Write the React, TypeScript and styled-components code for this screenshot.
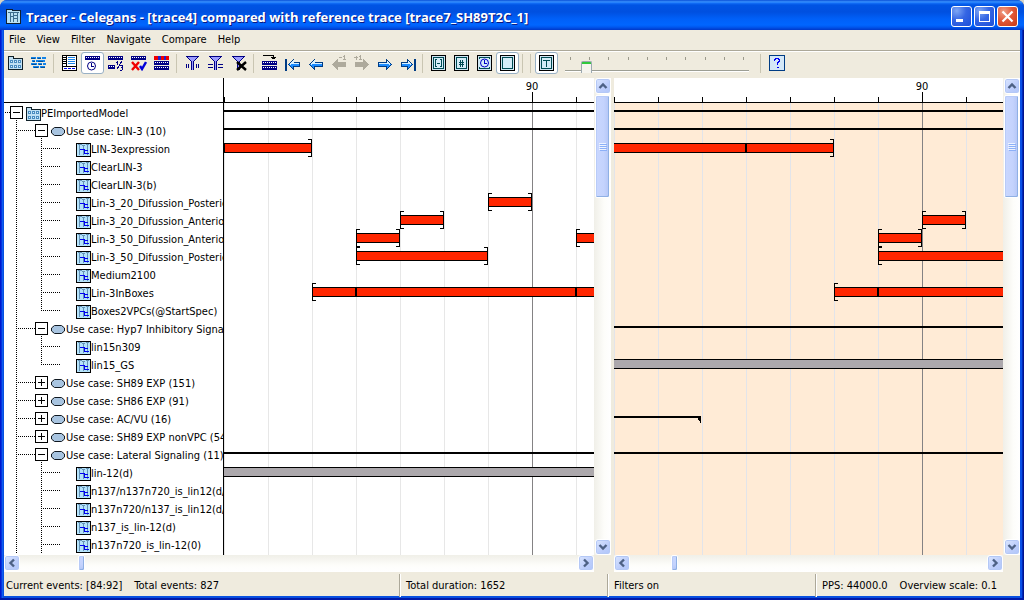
import React from "react";
import styled, { createGlobalStyle, css } from "styled-components";

const ROW = 18;
const HEADER = 25;
const STEP = 44;
const FIRST = 83;
const UI_FONT = `"DejaVu Sans Condensed", "Noto Sans", sans-serif`;

const GlobalStyle = createGlobalStyle`
  * { box-sizing: border-box; }
  body {
    margin: 0;
    background: #d8d4c4;
    font-family: ${UI_FONT};
    font-size: 11px;
    line-height: 14px;
    color: #000;
  }
  button { font: inherit; color: inherit; padding: 0; margin: 0; border: 0; background: none; }
`;

/* ---------- window frame ---------- */

const Window = styled.div`
  display: flex;
  flex-direction: column;
  min-height: 100vh;
  padding: 0 4px 4px;
  border-radius: 7px 7px 0 0;
  overflow: hidden;
  background:
    linear-gradient(to bottom, transparent calc(100% - 2px), #0019a8 calc(100% - 2px)),
    linear-gradient(to right, #0019cf 0 1px, #0734de 1px 2px, #0f5cf0 2px 3px, #0850e0 3px calc(100% - 4px), #0850e8 calc(100% - 4px) calc(100% - 2px), #0028b8 calc(100% - 2px) calc(100% - 1px), #00138c calc(100% - 1px));
`;

const TitleBar = styled.header`
  display: flex;
  align-items: center;
  height: 30px;
  margin: 0 -4px;
  padding: 3px 6px 0;
  gap: 5px;
  background: linear-gradient(to bottom, #0a50d8 0, #3a94ff 2px, #1470f8 3px, #0054e4 5px, #0050e0 12px, #0060f8 19px, #0066ff 25px, #0058f0 27px, #0038c8 30px);
`;

const Title = styled.h1`
  flex: 1;
  margin: 0;
  overflow: hidden;
  white-space: nowrap;
  font: bold 13px/18px "Open Sans", sans-serif;
  color: #fff;
  text-shadow: 1px 1px 0 #0a1883;
`;

const WindowButtons = styled.div`
  display: flex;
  gap: 2px;
`;

const WindowButton = styled.button<{ $close?: boolean }>`
  width: 21px;
  height: 21px;
  border: 1px solid #fff;
  border-radius: 3px;
  background: ${(p) =>
    p.$close
      ? "radial-gradient(circle at 30% 25%, #f0a088, #e2593a 45%, #c83a14)"
      : "radial-gradient(circle at 25% 20%, #7ea6f4, #3566e4 45%, #1d4fd8)"};
  svg { display: block; }
`;

/* ---------- menu and tool bars ---------- */

const MenuBar = styled.nav`
  display: flex;
  align-items: center;
  gap: 11px;
  height: 22px;
  padding: 0 5px 2px;
  background: #efebde;
  border-bottom: 1px solid #fff;
  box-shadow: inset 0 -1px 0 #aca899;
`;

const MenuItem = styled.button`
  height: 18px;
`;

const ToolBar = styled.div`
  display: flex;
  align-items: center;
  height: 26px;
  padding-bottom: 4px;
  background: #efebde;
`;

const ToolButton = styled.button<{ $on?: boolean }>`
  display: flex;
  flex: none;
  align-items: center;
  justify-content: center;
  width: 23px;
  height: 22px;
  border: 1px solid transparent;
  border-radius: 3px;
  ${(p) =>
    p.$on &&
    css`
      border-color: #98b0c4;
      background: #fff;
    `}
  svg { display: block; flex: none; }
`;

const Separator = styled.span`
  flex: none;
  width: 1px;
  height: 19px;
  margin: 0 4px 0 3px;
  background: #c9c5b2;
`;

const ScaleControl = styled.div`
  display: flex;
  flex-direction: column;
  flex: none;
  width: 199px;
  height: 22px;
  padding: 5px 8px 0 7px;
`;

const TickRow = styled.span`
  display: flex;
  justify-content: space-between;
  padding: 0 5px;
  height: 4px;
`;

const TickMark = styled.i`
  width: 1px;
  height: 3px;
  background: #9c9a8c;
`;

const Range = styled.input`
  appearance: none;
  width: 100%;
  height: 12px;
  margin: 0;
  background: linear-gradient(to bottom, transparent 9px, #9c9e94 9px 10px, #fff 10px 11px, transparent 11px);
  &::-webkit-slider-thumb {
    appearance: none;
    width: 11px;
    height: 12px;
    border: 1px solid #9ba8b0;
    border-bottom: 0;
    border-radius: 2px 2px 0 0;
    background: linear-gradient(to bottom, #2fc83c 0 2px, #f5f4ee 2px);
  }
`;

/* ---------- trace area ---------- */

const Workspace = styled.main`
  flex: 1;
  display: grid;
  grid-template-columns: minmax(0, 590fr) 17px 3px minmax(0, 389fr) 17px;
  grid-template-rows: 1fr 17px;
  background: #efebde;
`;

const Panel = styled.section<{ $tint?: string }>`
  display: flex;
  min-width: 0;
  background: ${(p) => p.$tint ?? "#fff"};
`;

const Tree = styled.div`
  flex: none;
  width: 220px;
  overflow: hidden;
  border-right: 1px solid #000;
`;

const TreeHeader = styled.div`
  height: ${HEADER}px;
  margin-bottom: 1px;
  border-bottom: 1px solid #000;
`;

const TreeRow = styled.div`
  display: flex;
  height: ${ROW}px;
  white-space: nowrap;
`;

const Indent = styled.span<{ $w: number }>`
  flex: none;
  width: ${(p) => p.$w}px;
`;

const Stem = styled.span<{ $half?: boolean }>`
  flex: none;
  width: 1px;
  height: ${(p) => (p.$half ? 9 : ROW)}px;
  background: repeating-linear-gradient(to bottom, #000 0 1px, transparent 1px 2px);
`;

const Branch = styled.span<{ $w: number }>`
  flex: none;
  width: ${(p) => p.$w}px;
  background: repeating-linear-gradient(to right, transparent 0 1px, #000 1px 2px) 0 8px / 100% 1px no-repeat;
`;

const ToggleCell = styled.span`
  display: flex;
  flex: none;
  flex-direction: column;
  align-items: center;
  width: 13px;
  padding-top: 2px;
`;

const ToggleStem = styled.span`
  flex: 1;
  width: 1px;
  background: repeating-linear-gradient(to bottom, transparent 0 1px, #000 1px 2px);
`;

const Toggle = styled.button`
  width: 13px;
  height: 13px;
  border: 1px solid #000;
  background: #fff;
  svg { display: block; }
`;

const NodeIcon = styled.svg`
  flex: none;
  margin: 3px 0 0;
`;

const NodeLabel = styled.span`
  line-height: 20px;
`;

const Timeline = styled.svg`
  flex: 1;
  min-width: 0;
  width: 0;
  overflow: hidden;
  font-family: ${UI_FONT};
  font-size: 11px;
`;

/* ---------- scroll bars ---------- */

const ScrollBar = styled.div<{ $vertical?: boolean }>`
  display: flex;
  flex-direction: ${(p) => (p.$vertical ? "column" : "row")};
  min-width: 0;
  padding: ${(p) => (p.$vertical ? "0 1px" : "0")};
  background: linear-gradient(${(p) => (p.$vertical ? "to right" : "to bottom")}, #f0efe8, #fdfdfa 60%, #fff);
`;

const ScrollButton = styled.button`
  display: flex;
  flex: none;
  align-items: center;
  justify-content: center;
  width: 16px;
  height: 16px;
  border: 1px solid #fff;
  border-radius: 3px;
  background: linear-gradient(135deg, #dbe6ff, #bccdfb 60%, #b0c6fa);
  box-shadow: inset 0 0 0 1px #b4c8f6;
`;

const Thumb = styled.div<{ $vertical?: boolean; $size: number }>`
  display: flex;
  flex: none;
  align-items: center;
  justify-content: center;
  width: ${(p) => (p.$vertical ? 15 : p.$size)}px;
  height: ${(p) => (p.$vertical ? p.$size : 16)}px;
  border: 1px solid #fff;
  border-radius: 2px;
  background: linear-gradient(${(p) => (p.$vertical ? "to right" : "to bottom")}, #c9d7ff, #c4d3fd 60%, #b4c6f6);
  box-shadow: inset -1px -1px 0 #8fb0e4, inset 1px 1px 0 #b8cbf8;
`;

const Gap = styled.span<{ $size?: number }>`
  flex: ${(p) => (p.$size ? `0 0 ${p.$size}px` : "1")};
`;

/* ---------- status bar ---------- */

const StatusBar = styled.footer`
  display: grid;
  grid-template-columns: minmax(0, 395fr) minmax(0, 208fr) minmax(0, 208fr) minmax(0, 205fr);
  height: 24px;
  padding-top: 2px;
  background: #efebde;
`;

const StatusCell = styled.div`
  display: flex;
  gap: 12px;
  padding: 1px 0 0 2px;
  line-height: 22px;
  white-space: nowrap;
  & + & {
    padding-left: 6px;
    border-left: 1px solid #aca899;
    box-shadow: inset 1px 0 0 #fff;
  }
`;

/* ---------- icons ---------- */

const NAVY = "#000084";

type IconProps = { children: React.ReactNode };
const Icon = ({ children }: IconProps) => (
  <svg width="16" height="16" viewBox="0 0 16 16" shapeRendering="crispEdges" fill="none" aria-hidden="true">
    {children}
  </svg>
);

const Film = ({ y, x = 0, w = 15 }: { y: number; x?: number; w?: number }) => (
  <>
    <rect x={x} y={y} width={w} height="4" fill={NAVY} />
    <path d={`M${x + 1} ${y + 1.5}H${x + w - 1}`} stroke="#fff" strokeDasharray="1 1" />
  </>
);

const FolderShape = () => (
  <>
    <path d="M0.5 14.5V1.5H5.5V3.5H14.5V14.5Z" fill="#bfe0f4" stroke="#102028" />
    <path d="M2 5h3v3H2zM6 5h3v3H6zM10 5h3v3h-3zM2 10h3v3H2zM6 10h3v3H6zM10 10h3v3h-3z" fill="#4a8cc0" />
    <path d="M3 6h1v1H3zM7 6h1v1H7zM11 6h1v1h-1zM3 11h1v1H3zM7 11h1v1H7zM11 11h1v1h-1z" fill="#d8f0ff" />
  </>
);

const Funnel = () => (
  <>
    <path d="M2 2H13L9 7V15H7V7Z" fill="#9c9cff" />
    <path d="M1 1.5H14M2 2.5H3M12 2.5H13M3 3.5H4M11 3.5H12M4 4.5H5M10 4.5H11M5 5.5H6M9 5.5H10M6.5 6V15M8.5 6V15" stroke={NAVY} />
  </>
);

const Arrow = ({ right, off, bar }: { right?: boolean; off?: boolean; bar?: boolean }) => {
  const tip = bar ? 3 : 1;
  return (
    <svg width="16" height="16" viewBox="0 0 16 16" shapeRendering="crispEdges" aria-hidden="true">
      <g transform={right ? "translate(16 0) scale(-1 1)" : undefined}>
        {bar && <rect x="0" y="4" width="2" height="12" fill="#003c84" />}
        <path
          d={`M${tip}.5 9.5L${tip + 5}.5 4.500V7.5H14.5V11.5H${tip + 5}.5V14.5Z`}
          fill={off ? "#aeaa9c" : "#1c8cff"}
          stroke={off ? "#aeaa9c" : "#003c84"}
        />
        {!off && <path d={`M${tip + 2} 9.5L${tip + 5} 6.5V8.5H14`} fill="#d8f0ff" stroke="#d8f0ff" />}
      </g>
      {off && !right && <path d="M8 2.5h3M13.5 0v5M12 1.5h1M12 4.5h3" stroke="#aeaa9c" />}
      {off && right && <path d="M0 2.5h4M2 0.5v4M6.5 0v5M5 1.5h1M5 4.5h3" stroke="#aeaa9c" />}
    </svg>
  );
};

const Frame = ({ children }: { children?: React.ReactNode }) => (
  <>
    <rect x="0.5" y="0.5" width="14" height="15" fill="#cfe6f4" stroke="#000" />
    <rect x="2.5" y="2.5" width="10" height="11" fill="#d4ecf8" stroke="#004c54" />
    {children}
  </>
);

const icons = {
  table: <Icon><FolderShape /></Icon>,
  bricks: (
    <Icon>
      <path d="M0 3H5M6 3H10M11 3H15M1 6H4M5 6H14M0 9H6M7 9H11M12 9H15M2 12H8M9 12H14" stroke="#1484e8" strokeWidth="2" />
      <path d="M0 3.5H4M7 3.5H10M2 6.5H4M7 6.5H12M1 9.5H5M8 9.5H11M3 12.5H7M10 12.5H14" stroke="#00509c" />
    </Icon>
  ),
  list: (
    <Icon>
      <rect x="0.5" y="0.5" width="14" height="15" fill="#fff" stroke="#000" />
      <path d="M4.5 1V11M1 11.5H14" stroke="#000" />
      <path d="M1 2.5H4M1 4.5H4M1 6.5H4M1 8.5H4" stroke="#000" />
      <path d="M6 2.5H13M6 4.5H13M6 6.5H13M6 8.5H13" stroke="#1c84e8" />
      <path d="M2 13.5H13" stroke="#0000e0" strokeDasharray="3 1" />
    </Icon>
  ),
  filmClock: (
    <Icon>
      <Film y={1} />
      <circle cx="6.5" cy="11" r="4" stroke={NAVY} shapeRendering="auto" />
      <path d="M6.5 8V11.5H9" stroke={NAVY} />
    </Icon>
  ),
  filmThird: (
    <Icon>
      <Film y={1} />
      <Film y={10} w={7} />
      <path d="M9.5 6V10M8 7.5H9M14 6L9 14M12 10.5H15M14.5 11V12M13 12.5H15M14.5 13V15M12 15.5H14" stroke={NAVY} />
    </Icon>
  ),
  filmCheck: (
    <Icon>
      <Film y={1} />
      <path d="M1 7L8 15M8 7L1 15" stroke="#f00000" strokeWidth="2.4" shapeRendering="auto" />
      <path d="M9 11L11 14L15 7" stroke="#0000d8" strokeWidth="2.4" shapeRendering="auto" />
    </Icon>
  ),
  filmRed: (
    <Icon>
      <rect y="1" width="15" height="4" fill="#f00000" />
      <path d="M4 1h3v4H4zM10 1h2v4H10z" fill="#2020d0" />
      <Film y={6} />
      <Film y={11} />
    </Icon>
  ),
  funnelV: (
    <Icon>
      <Funnel />
      <path d="M1.5 9V13M3.5 9V13M11.5 9V13M13.5 9V13" stroke={NAVY} />
    </Icon>
  ),
  funnelH: (
    <Icon>
      <Funnel />
      <path d="M0 9.5H5M0 12.5H5M10 9.5H15M10 12.5H15" stroke={NAVY} />
    </Icon>
  ),
  funnelX: (
    <Icon>
      <Funnel />
      <path d="M6 7L15 15M15 7L6 15" stroke="#000" strokeWidth="2.4" shapeRendering="auto" />
    </Icon>
  ),
  insert: (
    <Icon>
      <path d="M1 0.5H11.5V4M9 2.5H14M10 3.5H13" stroke="#000" />
      <Film y={6} />
      <Film y={11} />
    </Icon>
  ),
  brackets: (
    <Icon><Frame><path d="M6 4.5H4.5V11.5H6M9 4.5H10.5V11.5H9M6 8.5H9" stroke="#004c54" /></Frame></Icon>
  ),
  hash: (
    <Icon><Frame><path d="M6.5 5V12M8.5 5V12M5 7.5H10M5 9.5H10" stroke="#004c54" /></Frame></Icon>
  ),
  clock: (
    <Icon>
      <Frame>
        <rect x="2" y="4" width="11" height="8" fill="#d4ecf8" />
        <circle cx="7.5" cy="8" r="4" stroke="#0000c8" shapeRendering="auto" />
        <path d="M7.5 5V8.5H10" stroke="#0000c8" />
      </Frame>
    </Icon>
  ),
  blank: <Icon><Frame /></Icon>,
  text: <Icon><Frame><path d="M4 5.5H11M7.5 5V12" stroke="#004c54" /></Frame></Icon>,
  help: (
    <Icon>
      <rect x="0.5" y="0.5" width="15" height="15" fill="#d4e8f8" stroke="#003c84" />
      <path d="M5.5 6V4.5H6.5V3.5H9.5V4.5H10.5V6.5H9.5V7.5H8.5V9.5M8 12.5H10" stroke="#0000f0" strokeWidth="1.4" />
    </Icon>
  ),
};

const Chevron = ({ turn }: { turn: number }) => (
  <svg width="10" height="10" viewBox="0 0 10 10" aria-hidden="true">
    <path d="M1.5 7L5 3.5L8.5 7" fill="none" stroke="#4d6185" strokeWidth="2.4" transform={`rotate(${turn} 5 5)`} />
  </svg>
);

/* ---------- data ---------- */

type TreeNode = { label: string; depth: 0 | 1 | 2; open?: boolean; last?: boolean };

const nodes: TreeNode[] = [
  { label: "PEImportedModel", depth: 0, open: true },
  { label: "Use case: LIN-3 (10)", depth: 1, open: true },
  { label: "LIN-3expression", depth: 2 },
  { label: "ClearLIN-3", depth: 2 },
  { label: "ClearLIN-3(b)", depth: 2 },
  { label: "Lin-3_20_Difussion_Posterio", depth: 2 },
  { label: "Lin-3_20_Difussion_Anterio", depth: 2 },
  { label: "Lin-3_50_Difussion_Anterio", depth: 2 },
  { label: "Lin-3_50_Difussion_Posterio", depth: 2 },
  { label: "Medium2100", depth: 2 },
  { label: "Lin-3InBoxes", depth: 2 },
  { label: "Boxes2VPCs(@StartSpec)", depth: 2, last: true },
  { label: "Use case: Hyp7 Inhibitory Signal", depth: 1, open: true },
  { label: "lin15n309", depth: 2 },
  { label: "lin15_GS", depth: 2, last: true },
  { label: "Use case: SH89 EXP (151)", depth: 1 },
  { label: "Use case: SH86 EXP (91)", depth: 1 },
  { label: "Use case: AC/VU (16)", depth: 1 },
  { label: "Use case: SH89 EXP nonVPC (54)", depth: 1 },
  { label: "Use case: Lateral Signaling (11)", depth: 1, open: true },
  { label: "lin-12(d)", depth: 2 },
  { label: "n137/n137n720_is_lin12(d/", depth: 2 },
  { label: "n137n720/n137_is_lin12(d/", depth: 2 },
  { label: "n137_is_lin-12(d)", depth: 2 },
  { label: "n137n720_is_lin-12(0)", depth: 2 },
];

type Span = {
  row: number;
  kind: "case" | "active" | "idle";
  from?: number;
  to?: number;
  cuts?: number[];
  edge?: boolean;
};

const mainTrace: Span[] = [
  { row: 0, kind: "case" },
  { row: 1, kind: "case" },
  { row: 2, kind: "active", to: 85, edge: true },
  { row: 5, kind: "active", from: 89, to: 90 },
  { row: 6, kind: "active", from: 87, to: 88 },
  { row: 7, kind: "active", from: 86, to: 87 },
  { row: 7, kind: "active", from: 91 },
  { row: 8, kind: "active", from: 86, to: 89 },
  { row: 10, kind: "active", from: 85, cuts: [86, 91] },
  { row: 19, kind: "case" },
  { row: 20, kind: "idle" },
];

const referenceTrace: Span[] = [
  { row: 0, kind: "case" },
  { row: 1, kind: "case" },
  { row: 2, kind: "active", to: 88, cuts: [86] },
  { row: 6, kind: "active", from: 90, to: 91 },
  { row: 7, kind: "active", from: 89, to: 90 },
  { row: 8, kind: "active", from: 89 },
  { row: 10, kind: "active", from: 88, cuts: [89] },
  { row: 12, kind: "case" },
  { row: 14, kind: "idle" },
  { row: 17, kind: "case", to: 85 },
  { row: 19, kind: "case" },
];

/* ---------- parts ---------- */

const xOf = (event: number) => (event - FIRST) * STEP;
const events = Array.from({ length: 60 }, (_, i) => FIRST + i);

const SpanShape = ({ span }: { span: Span }) => {
  const top = HEADER + 1 + span.row * ROW;
  const x = span.from === undefined ? 0 : xOf(span.from);
  const width = span.to === undefined ? "100%" : xOf(span.to) - x;
  if (span.kind === "case") {
    const end = span.to === undefined ? 0 : xOf(span.to) - 1;
    return (
      <>
        <rect x={x} y={top + 6} width={end || "100%"} height="2" />
        {end > 0 && <path d={`M${end - 4} ${top + 7}H${end}V${top + 14}Z`} />}
      </>
    );
  }
  const right = span.to === undefined ? 0 : xOf(span.to);
  return (
    <>
      <rect x={x} y={top + 3} width={width} height="10" />
      <rect x={x} y={top + 4} width={width} height="8" fill={span.kind === "active" ? "#ff2600" : "#aca8ac"} />
      {span.edge && <rect x={x} y={top + 3} width="1" height="10" />}
      {span.from !== undefined && (
        <path d={`M${x + 4} ${top - 0.5}H${x + 0.5}V${top + 16.5}H${x + 4}`} fill="none" stroke="#000" />
      )}
      {right > 0 && (
        <path d={`M${right - 4} ${top - 0.5}H${right - 0.5}V${top + 16.5}H${right - 4}`} fill="none" stroke="#000" />
      )}
      {span.cuts?.map((c) => <rect key={c} x={xOf(c) - 1} y={top + 3} width="2" height="10" />)}
    </>
  );
};

const Trace = ({ spans, grid, label }: { spans: Span[]; grid: string; label: string }) => (
  <Timeline shapeRendering="crispEdges" role="img" aria-label={label}>
    <rect width="100%" height={HEADER} fill="#fff" />
    {events.map((e) => (
      <g key={e}>
        <rect x={xOf(e)} y={HEADER} width="1" height="100%" fill={e % 10 === 0 ? "#848284" : grid} />
        <rect x={xOf(e)} y={e % 10 === 0 ? 14 : 19} width="1" height={e % 10 === 0 ? 10 : 5} />
        {e % 10 === 0 && (
          <text x={xOf(e)} y="12" textAnchor="middle">{e}</text>
        )}
      </g>
    ))}
    <rect y={HEADER - 1} width="100%" height="1" />
    {spans.map((s, i) => <SpanShape key={i} span={s} />)}
  </Timeline>
);

const Expander = ({ open, label }: { open?: boolean; label: string }) => (
  <ToggleCell>
    <Toggle type="button" aria-expanded={!!open} aria-label={label}>
      <svg width="11" height="11" viewBox="0 0 11 11" shapeRendering="crispEdges" aria-hidden="true">
        <path d={open ? "M2 5.5H9" : "M2 5.5H9M5.5 2V9"} stroke="#000" />
      </svg>
    </Toggle>
    {open && <ToggleStem />}
  </ToggleCell>
);

const TreeItem = ({ node }: { node: TreeNode }) => {
  if (node.depth === 0) {
    return (
      <TreeRow role="treeitem">
        <Branch $w={6} />
        <Expander open={node.open} label={node.label} />
        <Indent $w={3} />
        <NodeIcon width="15" height="15" viewBox="0 1 15 15" shapeRendering="crispEdges">
          <FolderShape />
        </NodeIcon>
        <NodeLabel>{node.label}</NodeLabel>
      </TreeRow>
    );
  }
  if (node.depth === 1) {
    return (
      <TreeRow role="treeitem">
        <Indent $w={12} />
        <Stem />
        <Branch $w={18} />
        <Expander open={node.open} label={node.label} />
        <Indent $w={2} />
        <NodeIcon width="16" height="12" viewBox="0 0 16 12">
          <path d="M4.500 2.500H11.500L14.500 5V8L11.500 10.500H4.500L1.500 8V5Z" fill="#a8c4e0" stroke="#101820" />
        </NodeIcon>
        <NodeLabel>{node.label}</NodeLabel>
      </TreeRow>
    );
  }
  return (
    <TreeRow role="treeitem">
      <Indent $w={12} />
      <Stem />
      <Indent $w={24} />
      <Stem $half={node.last} />
      <Branch $w={19} />
      <Indent $w={15} />
      <NodeIcon width="15" height="14" viewBox="0 0 15 14" shapeRendering="crispEdges" fill="none">
        <rect x="0.5" y="0.5" width="14" height="13" fill="#b5e3fb" stroke="#000" />
        <path d="M2 1.5H6M6 2.5H9M10 1.5H13M3.5 2V12M7.5 2V12M11.5 2V12" stroke="#6494b8" />
        <path d="M4 6.5H8.5V10.5H13M8 7.5H12" stroke="#0000f0" />
      </NodeIcon>
      <NodeLabel>{node.label}</NodeLabel>
    </TreeRow>
  );
};

const VScroll = () => (
  <ScrollBar $vertical>
    <ScrollButton type="button" aria-label="Scroll up"><Chevron turn={0} /></ScrollButton>
    <Gap $size={1} />
    <Thumb $vertical $size={103}>
      <svg width="8" height="8" viewBox="0 0 8 8" shapeRendering="crispEdges" aria-hidden="true">
        <path d="M0 0.5H7M0 2.5H7M0 4.5H7M0 6.5H7" stroke="#eef4ff" />
        <path d="M1 1.5H8M1 3.5H8M1 5.5H8M1 7.5H8" stroke="#8cb0f8" />
      </svg>
    </Thumb>
    <Gap />
    <ScrollButton type="button" aria-label="Scroll down"><Chevron turn={180} /></ScrollButton>
  </ScrollBar>
);

const HScroll = ({ offset }: { offset: number }) => (
  <ScrollBar>
    <ScrollButton type="button" aria-label="Scroll left"><Chevron turn={-90} /></ScrollButton>
    <Gap $size={offset} />
    <Thumb $size={7} />
    <Gap />
    <ScrollButton type="button" aria-label="Scroll right"><Chevron turn={90} /></ScrollButton>
  </ScrollBar>
);

type Tool = { name: string; icon: React.ReactNode; on?: boolean };
const Tools = ({ items }: { items: Tool[] }) => (
  <>
    {items.map((t) => (
      <ToolButton key={t.name} type="button" title={t.name} aria-label={t.name} $on={t.on}>{t.icon}</ToolButton>
    ))}
  </>
);

export default function App() {
  return (
    <>
      <GlobalStyle />
      <Window>
        <TitleBar>
          <svg width="15" height="15" viewBox="0 0 15 15" shapeRendering="crispEdges" aria-hidden="true">
            <path d="M0.5 14.5V0.5H6.5V1.5H14.5V14.5Z" fill="#b8e0f4" stroke="#102030" />
            <path d="M2 3.5H13M4.5 4V13M7.5 4V13M11.5 4V13M5 7.5H8M8 6.5H12M8 9.5H12" stroke="#3c6c8c" fill="none" />
          </svg>
          <Title>Tracer - Celegans - [trace4] compared with reference trace [trace7_SH89T2C_1]</Title>
          <WindowButtons>
            <WindowButton type="button" aria-label="Minimize">
              <svg width="19" height="19" viewBox="0 0 19 19"><rect x="4" y="12" width="7" height="3" fill="#fff" /></svg>
            </WindowButton>
            <WindowButton type="button" aria-label="Maximize">
              <svg width="19" height="19" viewBox="0 0 19 19" shapeRendering="crispEdges">
                <path d="M4 4H15V15H4ZM5 7V14H14V7Z" fill="#fff" fillRule="evenodd" />
              </svg>
            </WindowButton>
            <WindowButton type="button" aria-label="Close" $close>
              <svg width="19" height="19" viewBox="0 0 19 19">
                <path d="M4.500 4.500L14.500 14.500M14.500 4.500L4.500 14.500" stroke="#fff" strokeWidth="2.200" />
              </svg>
            </WindowButton>
          </WindowButtons>
        </TitleBar>

        <MenuBar>
          {["File", "View", "Filter", "Navigate", "Compare", "Help"].map((m) => (
            <MenuItem key={m} type="button">{m}</MenuItem>
          ))}
        </MenuBar>

        <ToolBar role="toolbar">
          <Tools items={[{ name: "Model", icon: icons.table }, { name: "Blocks", icon: icons.bricks }]} />
          <Separator />
          <Tools
            items={[
              { name: "List", icon: icons.list },
              { name: "Time", icon: icons.filmClock, on: true },
              { name: "Fraction", icon: icons.filmThird },
              { name: "Verify", icon: icons.filmCheck },
              { name: "Highlight", icon: icons.filmRed },
            ]}
          />
          <Separator />
          <Tools
            items={[
              { name: "Filter columns", icon: icons.funnelV },
              { name: "Filter rows", icon: icons.funnelH },
              { name: "Clear filters", icon: icons.funnelX },
            ]}
          />
          <Separator />
          <Tools
            items={[
              { name: "Go to event", icon: icons.insert },
              { name: "First", icon: <Arrow bar /> },
              { name: "Previous", icon: <Arrow /> },
              { name: "Back one", icon: <Arrow off /> },
              { name: "Forward one", icon: <Arrow off right /> },
              { name: "Next", icon: <Arrow right /> },
              { name: "Last", icon: <Arrow right bar /> },
            ]}
          />
          <Separator />
          <Tools
            items={[
              { name: "Intervals", icon: icons.brackets },
              { name: "Numbers", icon: icons.hash },
              { name: "Clock", icon: icons.clock },
              { name: "None", icon: icons.blank, on: true },
            ]}
          />
          <Separator />
          <Separator />
          <Tools items={[{ name: "Labels", icon: icons.text, on: true }]} />
          <ScaleControl>
            <TickRow>{Array.from({ length: 10 }, (_, i) => <TickMark key={i} />)}</TickRow>
            <Range type="range" min={0} max={100} defaultValue={9} aria-label="Scale" />
          </ScaleControl>
          <Separator />
          <Tools items={[{ name: "Help", icon: icons.help }]} />
        </ToolBar>

        <Workspace>
          <Panel>
            <Tree role="tree">
              <TreeHeader />
              {nodes.map((n) => <TreeItem key={n.label} node={n} />)}
            </Tree>
            <Trace spans={mainTrace} grid="#e7e7e7" label="trace4" />
          </Panel>
          <VScroll />
          <span />
          <Panel $tint="#ffebd6">
            <Trace spans={referenceTrace} grid="#e2e4ea" label="trace7_SH89T2C_1" />
          </Panel>
          <VScroll />
          <HScroll offset={58} />
          <span />
          <span />
          <HScroll offset={41} />
          <span />
        </Workspace>

        <StatusBar>
          <StatusCell>
            <span>Current events: [84:92]</span>
            <span>Total events: 827</span>
          </StatusCell>
          <StatusCell>Total duration: 1652</StatusCell>
          <StatusCell>Filters on</StatusCell>
          <StatusCell>
            <span>PPS: 44000.0</span>
            <span>Overview scale: 0.1</span>
          </StatusCell>
        </StatusBar>
      </Window>
    </>
  );
}
